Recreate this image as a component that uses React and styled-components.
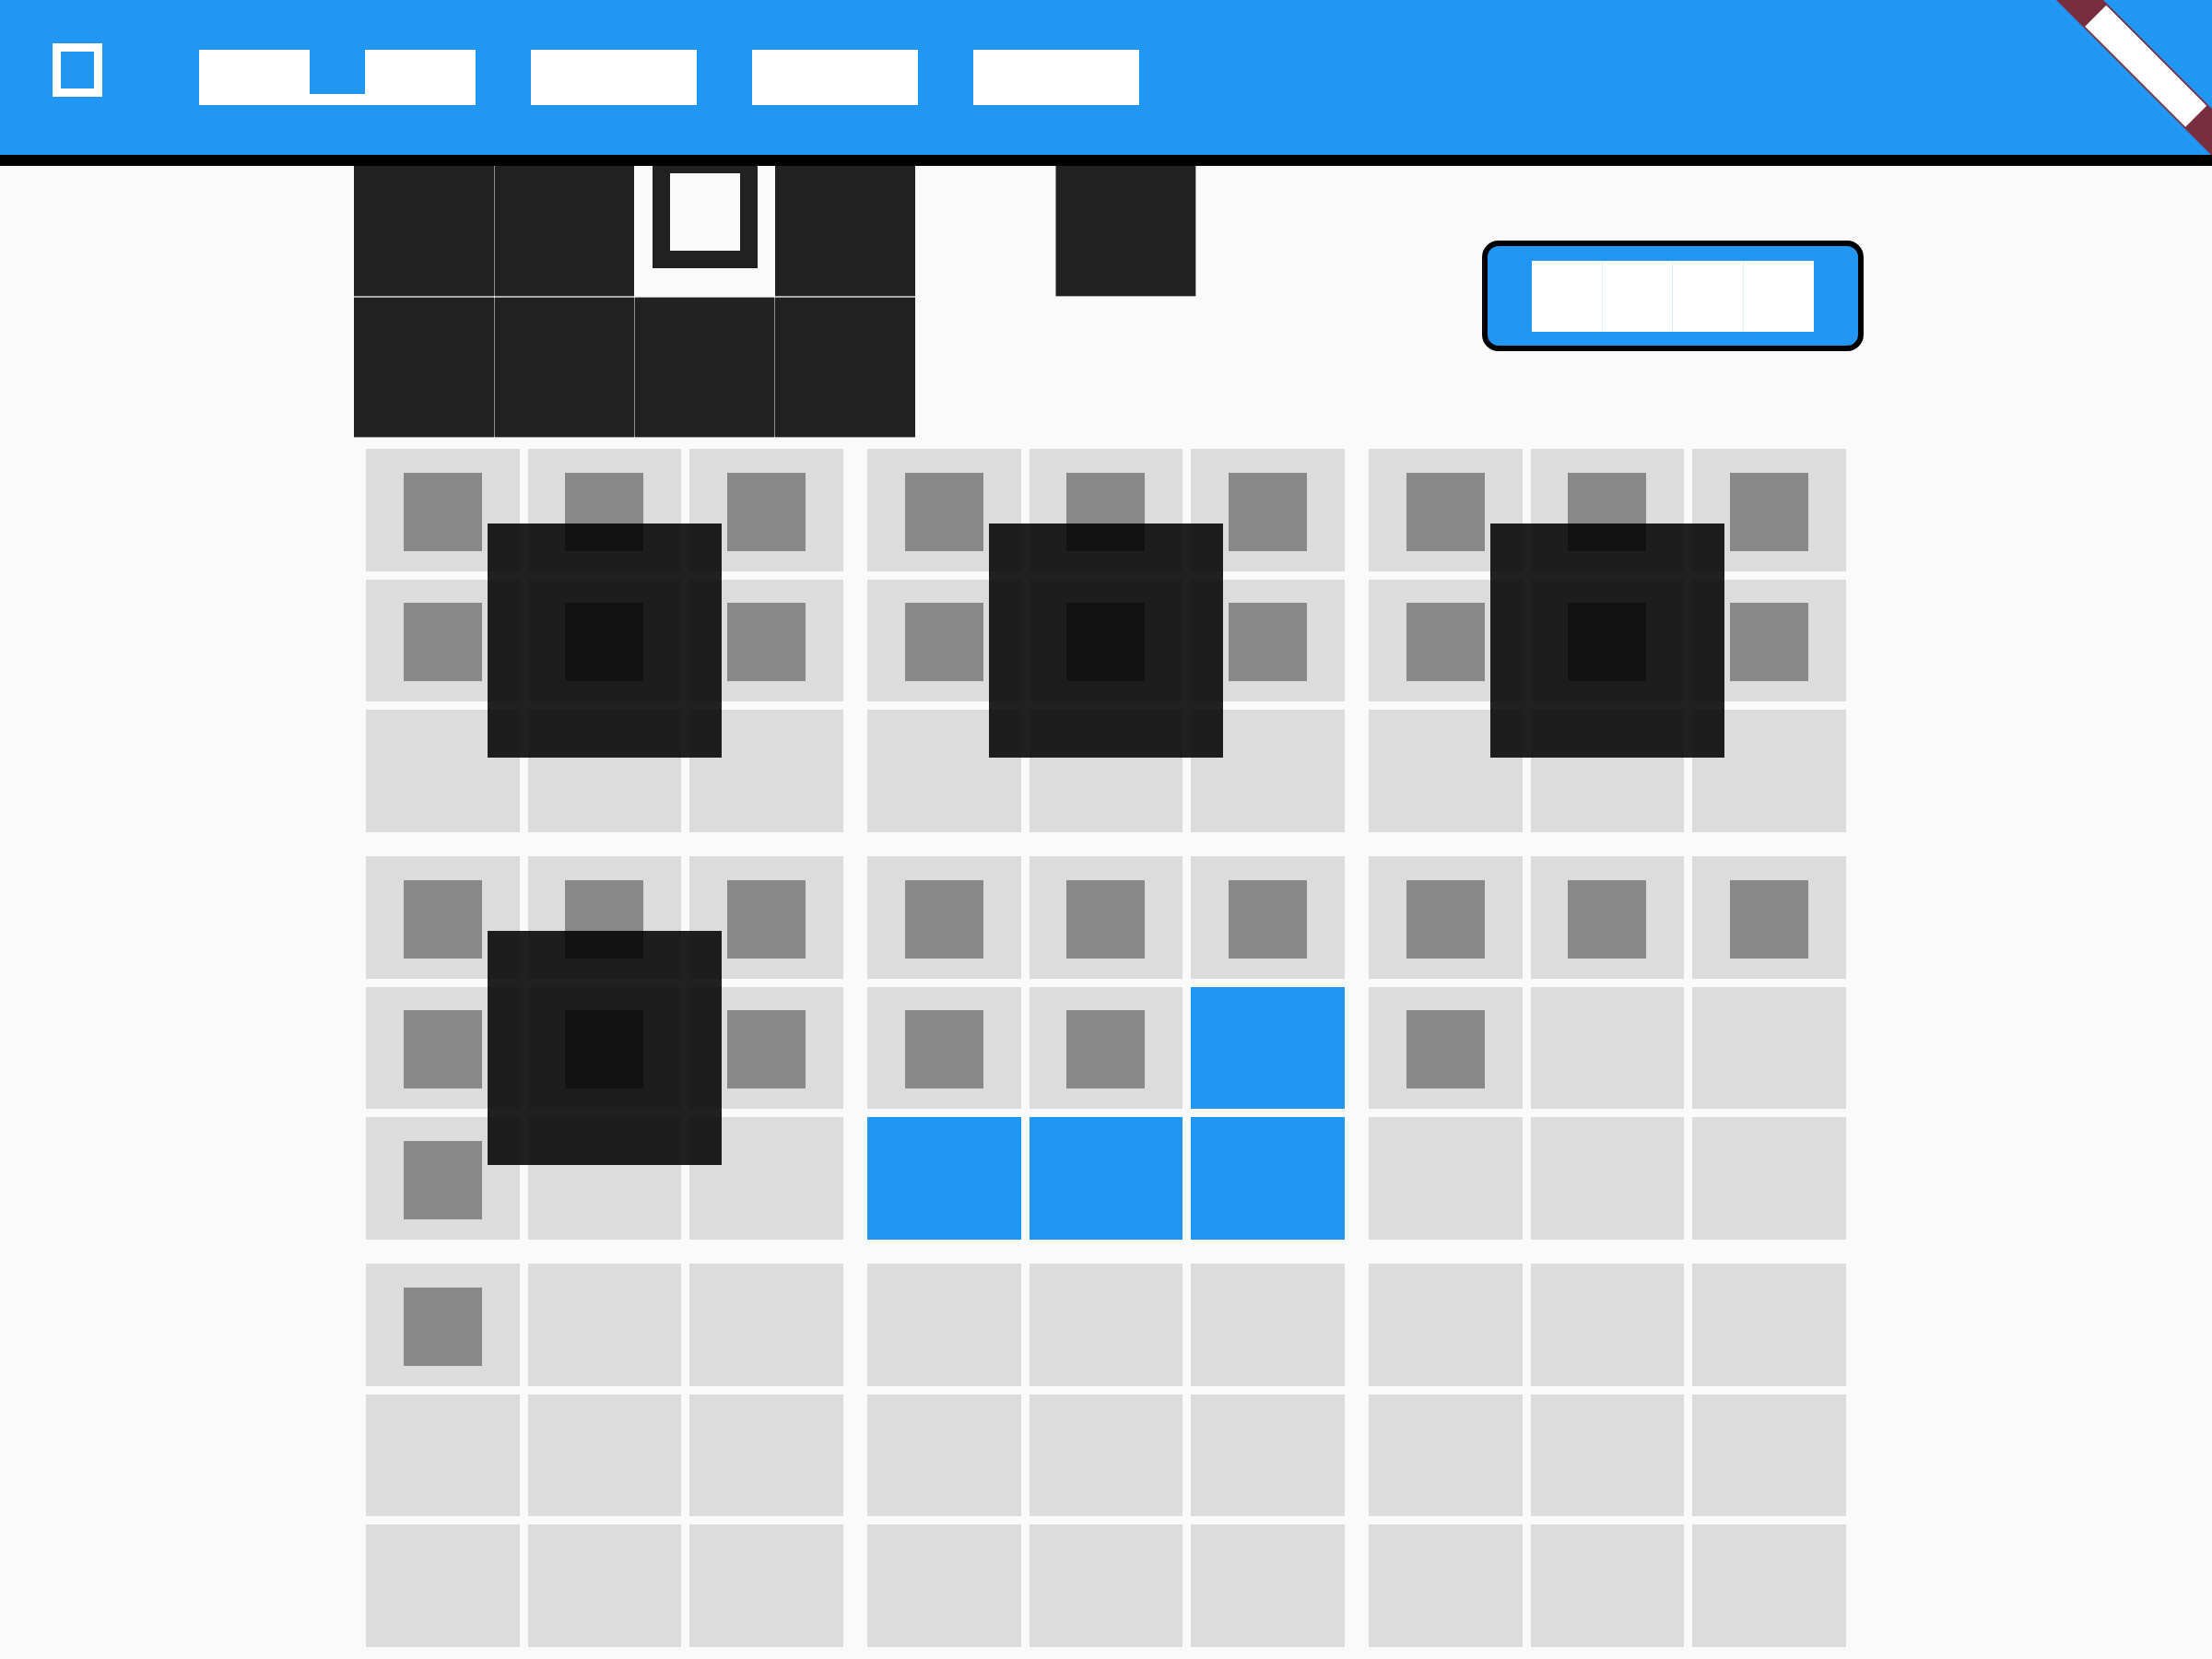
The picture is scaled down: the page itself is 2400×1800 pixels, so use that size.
import React from "react";
import styled, { createGlobalStyle } from "styled-components";

const BLUE = "#2196f3";
const PAPER = "#fafafa";
const INK = "#212121";

const GlobalStyle = createGlobalStyle`
  *, *::before, *::after { box-sizing: border-box; }
  body {
    margin: 0;
    background: ${PAPER};
    font-family: Roboto, "Liberation Sans", sans-serif;
  }
  button { margin: 0; padding: 0; border: 0; border-radius: 0; cursor: pointer; }
`;

const Page = styled.div`
  display: flex;
  flex-direction: column;
  min-height: 100vh;
`;

const Header = styled.header`
  position: relative;
  z-index: 1;
  display: flex;
  align-items: center;
  gap: 105px;
  height: 180px;
  padding-left: 57px;
  background: ${BLUE};
  border-bottom: 12px solid #000;
`;

const MenuButton = styled.button`
  width: 54px;
  height: 58px;
  margin-bottom: 16px;
  background: transparent;
  border: 9px solid #fff;
`;

const Title = styled.h1`
  display: flex;
  gap: 60px;
  margin: 0;
`;

const Word = styled.span`
  display: flex;
  align-items: flex-end;
`;

const Glyphs = styled.span`
  width: ${({ $count }) => $count * 60}px;
  height: ${({ $low }) => ($low ? 12 : 60)}px;
  background: #fff;
`;

const Ribbon = styled.svg`
  position: absolute;
  top: 0;
  right: 0;
`;

const Main = styled.main`
  flex: 1;
  display: flex;
  flex-direction: column;
  width: 68%;
  margin: -12px auto 0;
`;

const StatusBar = styled.section`
  display: grid;
  grid-template-columns: minmax(0, 3fr) minmax(0, 1fr);
  align-items: center;
`;

const Message = styled.div`
  display: grid;
  grid-template-columns: 152px 151px 151px 152px 151px 151px;
  grid-template-rows: 153px 151px;
  gap: 2px 1px;
`;

const Tile = styled.span`
  grid-column: ${({ $column }) => $column};
  background: ${INK};
  box-shadow:
    ${({ $left }) => ($left ? "-1px 0 0 #8e8e8e," : "")}
    ${({ $right }) => ($right ? "1px 0 0 #ababab," : "")}
    0 -1px 0 #ababab,
    0 1px 0 #ababab;
`;

const SymbolTile = styled.span`
  grid-column: 3;
  display: flex;
  justify-content: center;
  align-items: flex-end;
  padding-bottom: 30px;
`;

const Frame = styled.span`
  width: 114px;
  height: 122px;
  border: 19px solid ${INK};
`;

const RestartButton = styled.button`
  && {
    display: flex;
    justify-content: center;
    align-items: center;
    justify-self: start;
    height: 120px;
    padding: 0 48px;
    background: ${BLUE};
    border: 6px solid #000;
    border-radius: 18px;
  }
`;

const Label = styled.span`
  display: grid;
  grid-template-columns: 76px 75px 76px 76px;
  gap: 1px;
  height: 77px;
  background: #e0f1fd;
`;

const Letter = styled.span`
  background: #fff;
`;

const Boards = styled.section`
  flex: 1;
  display: grid;
  grid-template-columns: repeat(3, 1fr);
  grid-template-rows: repeat(3, 1fr);
`;

const Board = styled.div`
  position: relative;
  display: grid;
  grid-template-columns: repeat(3, 1fr);
  grid-template-rows: repeat(3, 1fr);
  gap: 9px;
  min-height: 160px;
  padding: 13px;
`;

const Cell = styled.button`
  && {
    display: flex;
    justify-content: center;
    align-items: center;
    padding-top: 4px;
    background: ${({ $open }) => ($open ? BLUE : "#dcdcdc")};
  }
`;

const Mark = styled.span`
  width: 85px;
  height: 85px;
  background: rgba(0, 0, 0, 0.38);
`;

const Winner = styled.span`
  position: absolute;
  inset: 0;
  width: 254px;
  height: 254px;
  margin: auto;
  background: rgba(0, 0, 0, 0.87);
  pointer-events: none;
`;

const words = [
  [{ count: 2 }, { count: 1, low: true }, { count: 2 }],
  [{ count: 3 }],
  [{ count: 3 }],
  [{ count: 3 }],
];

const boards = [
  { marks: 6, won: true, open: [] },
  { marks: 6, won: true, open: [] },
  { marks: 6, won: true, open: [] },
  { marks: 7, won: true, open: [] },
  { marks: 5, won: false, open: [5, 6, 7, 8] },
  { marks: 4, won: false, open: [] },
  { marks: 1, won: false, open: [] },
  { marks: 0, won: false, open: [] },
  { marks: 0, won: false, open: [] },
];

const cells = [0, 1, 2, 3, 4, 5, 6, 7, 8];

export default function App() {
  return (
    <Page>
      <GlobalStyle />
      <Header>
        <MenuButton type="button" />
        <Title>
          {words.map((word, i) => (
            <Word key={i}>
              {word.map((part, j) => (
                <Glyphs key={j} $count={part.count} $low={part.low} />
              ))}
            </Word>
          ))}
        </Title>
        <Ribbon width="180" height="170" viewBox="0 0 180 170" aria-hidden="true">
          <polygon points="11,0 62,0 180,118 180,169" fill="#792e3f" />
          <polygon points="65.2,5.8 174.2,114.8 151.2,137.8 42.2,28.8" fill="#fff" />
        </Ribbon>
      </Header>
      <Main>
        <StatusBar>
          <Message>
            <Tile $column={1} />
            <Tile $column={2} $left />
            <SymbolTile>
              <Frame />
            </SymbolTile>
            <Tile $column={4} />
            <Tile $column={6} $left $right />
            <Tile $column={1} />
            <Tile $column={2} $left />
            <Tile $column={3} $left />
            <Tile $column={4} $left />
          </Message>
          <RestartButton type="button">
            <Label>
              <Letter />
              <Letter />
              <Letter />
              <Letter />
            </Label>
          </RestartButton>
        </StatusBar>
        <Boards>
          {boards.map((board, b) => (
            <Board key={b}>
              {cells.map((c) => (
                <Cell key={c} type="button" $open={board.open.includes(c)}>
                  {c < board.marks && <Mark />}
                </Cell>
              ))}
              {board.won && <Winner />}
            </Board>
          ))}
        </Boards>
      </Main>
    </Page>
  );
}
